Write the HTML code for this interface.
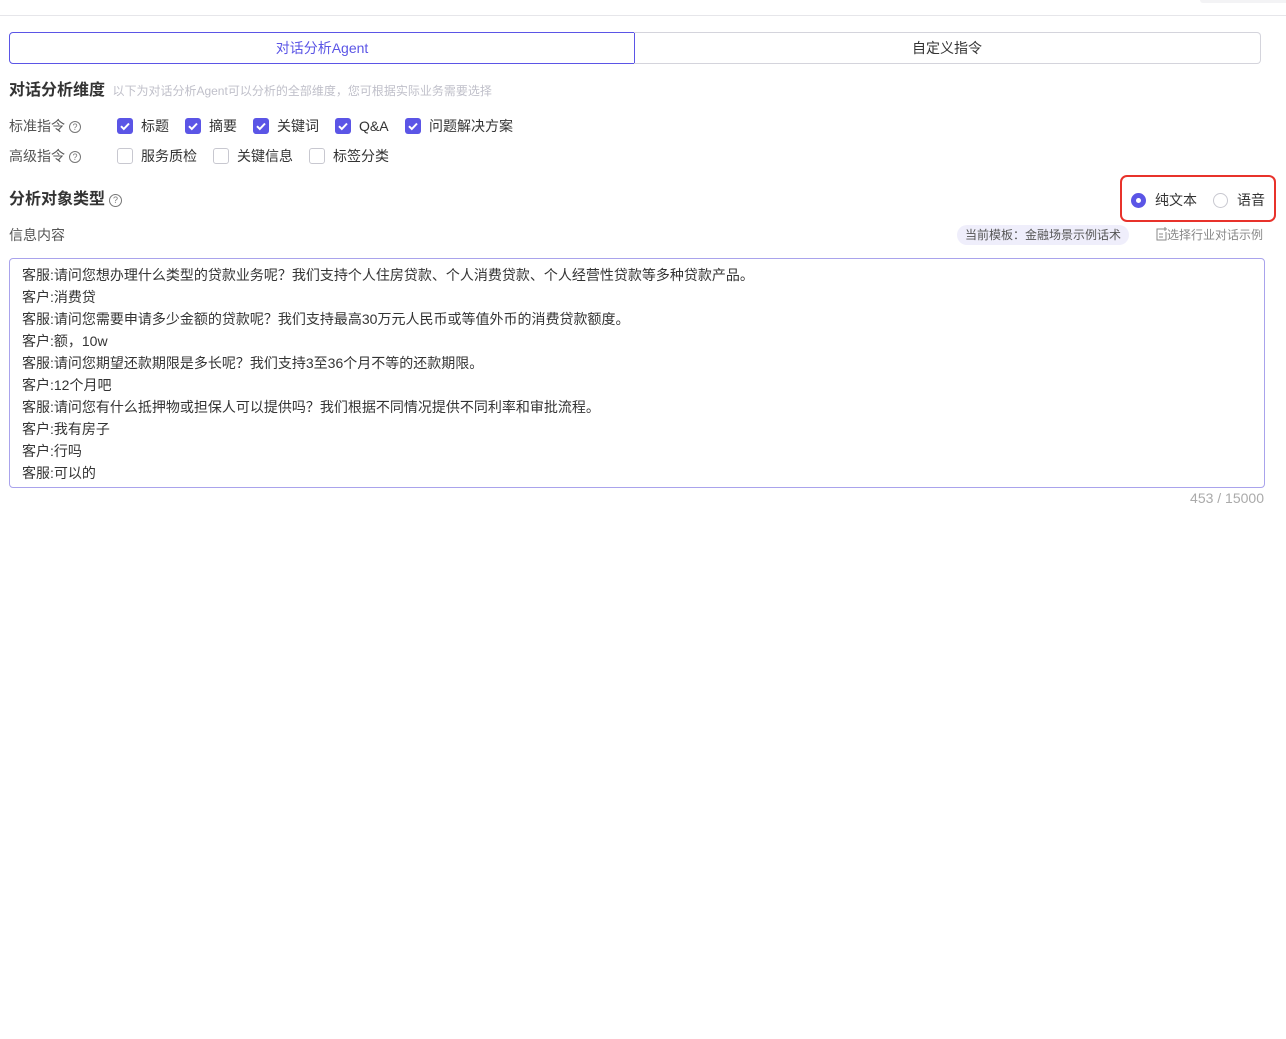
<!DOCTYPE html>
<html><head><meta charset="utf-8"><style>
*{box-sizing:border-box;margin:0;padding:0}
body{width:1286px;height:1039px;background:#fff;font-family:"Liberation Sans","Noto Sans CJK SC",sans-serif;color:#333;position:relative;overflow:hidden}
.a{position:absolute;white-space:nowrap}
.cb{position:absolute;width:16px;height:16px;border-radius:3px}
.on{background:#5b55e6}
.off{border:1px solid #c8c8d0;background:#fff}
.on svg{display:block}
.q{display:inline-block;width:12px;height:12px;border:1px solid #777;border-radius:50%;font-size:9px;line-height:10px;text-align:center;color:#777;vertical-align:1px;margin-left:4px;font-weight:normal}
</style></head><body>
<div class="a" style="left:0;top:15px;width:1286px;height:1px;background:#e6e6ea"></div>
<div class="a" style="left:1200px;top:0;width:86px;height:3px;background:#f3f3f5;border-radius:0 0 0 4px"></div>
<div class="a" style="left:9px;top:32px;width:626px;height:32px;border:1px solid #5b55e6;border-radius:4px 0 0 4px;color:#5b55e6;font-size:14px;text-align:center;line-height:30px">对话分析Agent</div>
<div class="a" style="left:634px;top:32px;width:627px;height:32px;border:1px solid #d4d4dc;border-left:none;border-radius:0 4px 4px 0;color:#333;font-size:14px;text-align:center;line-height:30px">自定义指令</div>
<div class="a" style="left:9px;top:80px;font-size:16px;color:#333;line-height:22px;font-weight:bold">对话分析维度 <span style="font-size:12px;color:#c0c0ca;margin-left:3px;font-weight:normal">以下为对话分析Agent可以分析的全部维度，您可根据实际业务需要选择</span></div>
<div class="a" style="left:9px;top:117px;font-size:14px;color:#555;line-height:18px">标准指令<span class="q">?</span></div>
<div class="a" style="left:9px;top:147px;font-size:14px;color:#555;line-height:18px">高级指令<span class="q">?</span></div>
<div class="cb on" style="left:117px;top:118px"><svg width="16" height="16"><path d="M4 8.2l2.8 2.8L12 5.5" stroke="#fff" stroke-width="2" fill="none"/></svg></div>
<div class="a" style="left:141px;top:117px;font-size:14px;line-height:18px">标题</div>
<div class="cb on" style="left:185px;top:118px"><svg width="16" height="16"><path d="M4 8.2l2.8 2.8L12 5.5" stroke="#fff" stroke-width="2" fill="none"/></svg></div>
<div class="a" style="left:209px;top:117px;font-size:14px;line-height:18px">摘要</div>
<div class="cb on" style="left:253px;top:118px"><svg width="16" height="16"><path d="M4 8.2l2.8 2.8L12 5.5" stroke="#fff" stroke-width="2" fill="none"/></svg></div>
<div class="a" style="left:277px;top:117px;font-size:14px;line-height:18px">关键词</div>
<div class="cb on" style="left:335px;top:118px"><svg width="16" height="16"><path d="M4 8.2l2.8 2.8L12 5.5" stroke="#fff" stroke-width="2" fill="none"/></svg></div>
<div class="a" style="left:359px;top:117px;font-size:14px;line-height:18px">Q&amp;A</div>
<div class="cb on" style="left:405px;top:118px"><svg width="16" height="16"><path d="M4 8.2l2.8 2.8L12 5.5" stroke="#fff" stroke-width="2" fill="none"/></svg></div>
<div class="a" style="left:429px;top:117px;font-size:14px;line-height:18px">问题解决方案</div>
<div class="cb off" style="left:117px;top:148px"></div>
<div class="a" style="left:141px;top:147px;font-size:14px;line-height:18px">服务质检</div>
<div class="cb off" style="left:213px;top:148px"></div>
<div class="a" style="left:237px;top:147px;font-size:14px;line-height:18px">关键信息</div>
<div class="cb off" style="left:309px;top:148px"></div>
<div class="a" style="left:333px;top:147px;font-size:14px;line-height:18px">标签分类</div>
<div class="a" style="left:9px;top:189px;font-size:16px;line-height:22px;color:#333;font-weight:bold">分析对象类型<span class="q" style="width:13px;height:13px">?</span></div>
<div class="a" style="left:1120px;top:175px;width:156px;height:47px;border:2px solid #e8322b;border-radius:7px"></div>
<div class="a" style="left:1131px;top:193px;width:15px;height:15px;border-radius:50%;background:#5b55e6"><div style="margin:5px;width:5px;height:5px;border-radius:50%;background:#fff"></div></div>
<div class="a" style="left:1155px;top:191px;font-size:14px;line-height:18px">纯文本</div>
<div class="a" style="left:1213px;top:193px;width:15px;height:15px;border-radius:50%;border:1px solid #c8c8d0"></div>
<div class="a" style="left:1237px;top:191px;font-size:14px;line-height:18px">语音</div>
<div class="a" style="left:9px;top:226px;font-size:14px;line-height:18px;color:#555">信息内容</div>
<div class="a" style="left:957px;top:225px;height:20px;padding:0 8px;background:#efeefb;border-radius:10px;font-size:12px;line-height:20px;color:#555">当前模板：金融场景示例话术</div>
<div class="a" style="left:1155px;top:226px;font-size:12px;line-height:18px;color:#888"><svg width="12" height="14" style="vertical-align:-2px"><path d="M8 2H2v11h9V5M4 7h4M4 10h4M10 0v4M8 2h4" stroke="#888" fill="none"/></svg>选择行业对话示例</div>
<div class="a" style="left:9px;top:258px;width:1256px;height:230px;border:1px solid #a9a3ec;border-radius:4px;padding:5px 12px;font-size:14px;line-height:22px;color:#333;white-space:pre">客服:请问您想办理什么类型的贷款业务呢？我们支持个人住房贷款、个人消费贷款、个人经营性贷款等多种贷款产品。
客户:消费贷
客服:请问您需要申请多少金额的贷款呢？我们支持最高30万元人民币或等值外币的消费贷款额度。
客户:额，10w
客服:请问您期望还款期限是多长呢？我们支持3至36个月不等的还款期限。
客户:12个月吧
客服:请问您有什么抵押物或担保人可以提供吗？我们根据不同情况提供不同利率和审批流程。
客户:我有房子
客户:行吗
客服:可以的</div>
<div class="a" style="right:22px;top:489px;font-size:14px;line-height:18px;color:#aaa">453 / 15000</div>
</body></html>
